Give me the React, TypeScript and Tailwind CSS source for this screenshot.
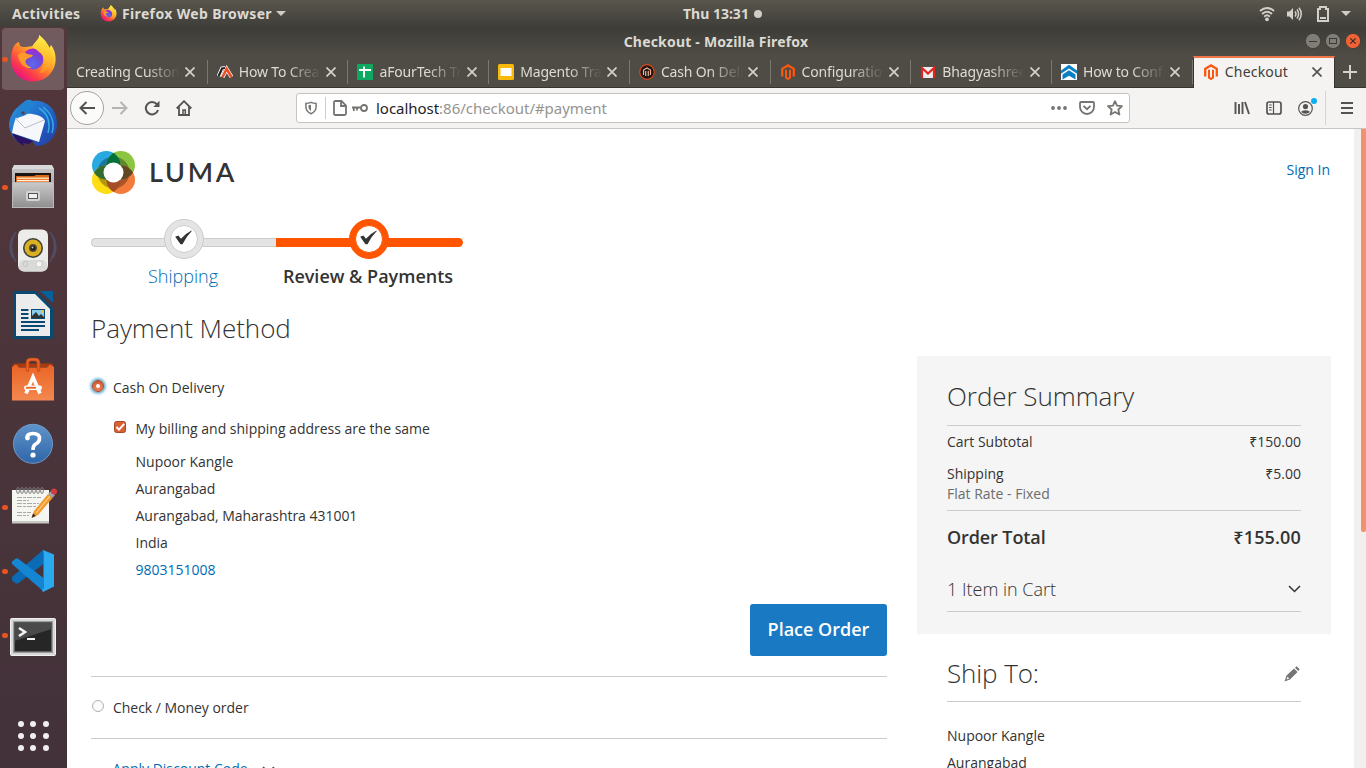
import React from "react";

const UI = "font-['Noto_Sans','Open_Sans',sans-serif]";

function Firefox({ size, id }: { size: number; id: string }) {
  return (
    <svg width={size} height={size} viewBox="0 0 48 48" className="shrink-0">
      <defs>
        <linearGradient id={id + "a"} x1="0.85" y1="0.1" x2="0.2" y2="0.95">
          <stop offset="0" stopColor="#fff44f" />
          <stop offset="0.3" stopColor="#ffbd2e" />
          <stop offset="0.55" stopColor="#ff7a2c" />
          <stop offset="0.8" stopColor="#fb3550" />
          <stop offset="1" stopColor="#e6128a" />
        </linearGradient>
        <radialGradient id={id + "b"} cx="0.5" cy="0.75" r="0.7">
          <stop offset="0" stopColor="#5a6cf0" />
          <stop offset="0.6" stopColor="#7047d8" />
          <stop offset="1" stopColor="#a52bd0" />
        </radialGradient>
        <linearGradient id={id + "c"} x1="0.6" y1="0" x2="0.5" y2="1">
          <stop offset="0" stopColor="#fff04a" />
          <stop offset="0.5" stopColor="#ffc62f" />
          <stop offset="1" stopColor="#ff8b25" />
        </linearGradient>
      </defs>
      <path d="M5 11 C6 9 9 7 10 7 L11 11 C13 12 15 12 17 12 L24 11 C28 4 31 3 30 0 C36 5 39 9 40 14 L42 10 C46 15 47 21 46.500 27 C45 38 36 46.500 24 46.500 C11 46.500 2 37 2 24 C2 20 3 14 5 11Z" fill={`url(#${id}a)`} />
      <circle cx="24" cy="24" r="10.500" fill={`url(#${id}b)`} />
      <path d="M23 12 C25 7 31 5 30 0 C36 5 41 11 43 19 C45 30 38 38 30 38 C37 31 36 20 30 17 C27 14 25 13 23 12Z" fill={`url(#${id}c)`} />
      <path d="M9 20 C12 17 16 17 18 19 L24 20 C23 23 19 22 17 25 C15 28 19 31 23 33 C16 34 10 29 9 20Z" fill="#ff9a2a" />
    </svg>
  );
}

function Thunderbird() {
  return (
    <svg width="48" height="48" viewBox="0 0 48 48">
      <defs>
        <linearGradient id="tb" x1="0" y1="0" x2="1" y2="1">
          <stop offset="0" stopColor="#2f9be0" />
          <stop offset="0.6" stopColor="#1d5fc4" />
          <stop offset="1" stopColor="#2a3a9c" />
        </linearGradient>
      </defs>
      <path d="M14 4 C17 0 21 0 23 2 C37 0 48 10 48 25 C48 38 39 47 27 47 L24 42 L10 44 L14 46 C6 42 0 34 0 25 C1 17 5 11 9 8Z" fill="url(#tb)" />
      <path d="M3 34 L24 42 L20 45 L14 44 L15 47 C9 44 5 39 3 34Z" fill="#2a1264" />
      <path d="M7 19 L16 15 C22 14 34 16 36 22 L30 43 L3 34 C4 28 5 23 7 19Z" fill="#f6f7fa" />
      <path d="M6 19 L16 29 L35 21" fill="none" stroke="#b9bec9" strokeWidth="1" />
      <path d="M10 7 C14 2 20 1 23 2 C26 6 22 9 20 13 C17 18 10 17 8 20 C7 14 8 10 10 7Z" fill="#2282d2" />
      <path d="M30 9 C38 14 42 22 39 34 M34 8 C43 15 46 24 43 34" fill="none" stroke="#36abe4" strokeWidth="1.500" />
      <circle cx="14" cy="14" r="1.700" fill="#533f50" />
    </svg>
  );
}

function Files() {
  return (
    <svg width="48" height="48" viewBox="0 0 48 48">
      <defs>
        <linearGradient id="fl" x1="0" y1="0" x2="0" y2="1">
          <stop offset="0" stopColor="#c9c9c9" />
          <stop offset="1" stopColor="#8f8f8f" />
        </linearGradient>
      </defs>
      <path d="M5 3 H43 L45 6 V42 H3 V6Z" fill="url(#fl)" />
      <path d="M5 2 H43 L45 6 H3Z" fill="#d9d9d9" />
      <rect x="6" y="10" width="36" height="11" fill="#1b1512" />
      <path d="M7 13 H25 L27 12 H40 V20 H7Z" fill="#d86a1e" />
      <rect x="8" y="14.500" width="32" height="1.500" fill="#f6d9ad" />
      <path d="M8 16 H40 V20 H8Z" fill="#f4792f" />
      <rect x="8" y="17" width="32" height="1.200" fill="#fff0d8" />
      <rect x="3.500" y="19.500" width="41" height="25" fill="url(#fl)" stroke="#b9b9b9" strokeWidth="1" />
      <rect x="17" y="28" width="14" height="10" rx="2" fill="#d3d3d3" />
      <rect x="19.500" y="30.500" width="9" height="5" fill="#f0f0f0" stroke="#555" strokeWidth="1" />
    </svg>
  );
}

function Speaker() {
  return (
    <svg width="48" height="48" viewBox="0 0 48 48">
      <path d="M7 5 Q-2 18 7 35 M4 9 Q-2 20 4 31 M41 5 Q50 18 41 35 M44 9 Q50 20 44 31" fill="none" stroke="#53608a" strokeWidth="1.500" opacity="0.550" />
      <rect x="9" y="2.500" width="30" height="42" rx="6" fill="#ececea" />
      <rect x="10" y="33" width="28" height="11.500" rx="5" fill="#dadad8" />
      <circle cx="24" cy="21" r="10" fill="#3b3b3b" />
      <circle cx="24" cy="21" r="8.500" fill="#d9b021" />
      <circle cx="24" cy="21" r="4" fill="#59502c" />
      <circle cx="24" cy="21" r="2.500" fill="#1c1c1c" />
      <circle cx="23.500" cy="20.500" r="1" fill="#c9c9c9" />
      <circle cx="30" cy="37" r="3" fill="#f8f8f8" stroke="#c2c2c2" strokeWidth="0.700" />
      <rect x="14.500" y="34.500" width="4" height="5" rx="1.500" fill="none" stroke="#c6c6c6" />
    </svg>
  );
}

function Writer() {
  return (
    <svg width="48" height="48" viewBox="0 0 48 48">
      <path d="M6 0 H27 L44 17 V46 Q44 48 42 48 H6 Q4 48 4 46 V2 Q4 0 6 0Z" fill="#0a4a72" />
      <path d="M7 3 H26 L41 18 V45 H7Z" fill="#ececec" />
      <path d="M31 0 H44 V12Z" fill="#05609c" />
      <g fill="#0a4a72">
        <rect x="12" y="18" width="7.500" height="2" />
        <rect x="12" y="22" width="7.500" height="2" />
        <rect x="12" y="26" width="7.500" height="2" />
        <rect x="12" y="30" width="24" height="2" />
        <rect x="12" y="34" width="24" height="2" />
        <rect x="12" y="38" width="18" height="2" />
        <rect x="22" y="18" width="14" height="10" />
      </g>
      <rect x="23" y="19" width="12" height="8" fill="#89cdea" />
      <path d="M23 27 V25 L27 21 L30 25 L32 23 L35 26 V27Z" fill="#333" />
      <circle cx="33.500" cy="20.500" r="1.500" fill="#f2c230" />
    </svg>
  );
}

function Software() {
  return (
    <svg width="48" height="48" viewBox="0 0 48 48">
      <defs>
        <linearGradient id="sw" x1="0" y1="0" x2="0" y2="1">
          <stop offset="0" stopColor="#ea6424" />
          <stop offset="1" stopColor="#f38850" />
        </linearGradient>
      </defs>
      <path d="M5 8.500 H43 L45 12 H3Z" fill="#a93b0f" />
      <path d="M3 12 L7 9.500 L10 12.500 H38 L41 9.500 L45 12 V45.500 H3Z" fill="url(#sw)" />
      <path d="M18.500 15 V8 Q18.500 4.500 22 4.500 H26 Q29.500 4.500 29.500 8 V15" fill="none" stroke="#c84713" strokeWidth="3.500" strokeLinecap="round" />
      <path d="M18.500 15 V8 Q18.500 4.500 22 4.500 H26 Q29.500 4.500 29.500 8 V15" fill="none" stroke="#e8642c" strokeWidth="1.800" strokeLinecap="round" />
      <path d="M17 38.500 L24 22 L31 38.500" fill="none" stroke="#fff" strokeWidth="3.600" />
      <rect x="15" y="30.500" width="18" height="4.500" rx="2.200" fill="#fff" />
      <rect x="17" y="31.800" width="10" height="1.900" fill="#e9682b" />
    </svg>
  );
}

function Help() {
  return (
    <svg width="48" height="48" viewBox="0 0 48 48">
      <defs>
        <linearGradient id="hp" x1="0" y1="0" x2="0" y2="1">
          <stop offset="0" stopColor="#5f93ca" />
          <stop offset="1" stopColor="#2f66a8" />
        </linearGradient>
      </defs>
      <circle cx="24" cy="24.800" r="19.500" fill="url(#hp)" stroke="#6f9bcb" strokeWidth="1" />
      <path d="M18 19 Q18 14.500 24 14.500 Q30.500 14.500 30.500 19.500 Q30.500 23 26 25.500 Q24 27 24 31" fill="none" stroke="#fff" strokeWidth="3.600" />
      <circle cx="18.500" cy="19" r="2.400" fill="#fff" />
      <circle cx="24" cy="36" r="2.600" fill="#fff" />
    </svg>
  );
}

function Notes() {
  return (
    <svg width="48" height="48" viewBox="0 0 48 48">
      <rect x="3" y="7" width="37" height="33" fill="#f5f5f1" />
      <rect x="3" y="38" width="37" height="2.500" fill="#c9c9c5" />
      {[9, 13, 17, 21, 25, 29, 33].map((x) => (
        <ellipse key={x} cx={x} cy="7.500" rx="1.400" ry="3" fill="none" stroke="#7b7b7b" strokeWidth="1" />
      ))}
      <path d="M8 14.500 H32 M8 17.500 H20 M8 20.500 H30 M8 23.500 H28 M8 29.500 H22 M8 32.500 H20" stroke="#a9a9a5" strokeWidth="1" strokeDasharray="5 1 3 1" />
      <path d="M23 34 L25 28 L39 11 L43.500 15 L29 32Z" fill="#f0992d" />
      <path d="M27 30 L41 13" stroke="#ffc777" strokeWidth="1.300" />
      <path d="M39 11 L42 8 L46 12 L43.500 15Z" fill="#9fa3a8" />
      <circle cx="45" cy="8.500" r="3" fill="#d33a3f" />
      <path d="M22.500 35 L24 30.500 L27 33Z" fill="#3d2c18" />
    </svg>
  );
}

function Code() {
  return (
    <svg width="48" height="48" viewBox="0 0 48 48">
      <path d="M34 3 L3 30 V33.500 L7 36.500 L9 36.500 L34.500 17Z" fill="#0b6cb5" />
      <path d="M34 44 L3 17 V14.500 L7 11.500 L9 11.500 L34.500 31Z" fill="#1486d2" />
      <path d="M34 3 L45 7.500 V39.500 L34 45 L33 43 L34.500 41 V7Z" fill="#2baaf2" />
    </svg>
  );
}

function Terminal() {
  return (
    <svg width="48" height="48" viewBox="0 0 48 48">
      <rect x="1.500" y="7.500" width="45" height="37" rx="1" fill="#d9d9d9" stroke="#f0f0f0" />
      <rect x="4" y="10" width="40" height="32" fill="#9b9b9b" />
      <rect x="5.500" y="11.500" width="37" height="29" fill="#262626" />
      <path d="M5.500 11.500 H42.500 V18 L5.500 30Z" fill="#4a4a4a" />
      <path d="M10 17 L16 21 L10 25" fill="none" stroke="#f2f2f2" strokeWidth="2.600" />
      <rect x="18" y="27" width="8" height="2" fill="#f2f2f2" />
    </svg>
  );
}

const dock = [
  { icon: <Firefox size={48} id="fx" />, run: true, active: true },
  { icon: <Thunderbird /> },
  { icon: <Files />, run: true },
  { icon: <Speaker /> },
  { icon: <Writer /> },
  { icon: <Software /> },
  { icon: <Help /> },
  { icon: <Notes />, run: true },
  { icon: <Code />, run: true },
  { icon: <Terminal />, run: true },
];

function Dock() {
  return (
    <aside className="flex w-[67px] shrink-0 flex-col bg-linear-to-b from-[#52373b] to-[#43323a]">
      {dock.map((d, i) => (
        <div key={i} className="flex h-16 items-center pl-0.5">
          <div className={"relative flex h-[62px] w-[62px] items-center justify-center rounded-[4px] " + (d.active ? "bg-[#725b5f]" : "")}>
            {d.run && <span className="absolute top-[28.500px] left-0 size-[5.500px] rounded-full bg-[#e95420]" />}
            {d.icon}
          </div>
        </div>
      ))}
      <div className="mt-[54px] ml-[18px] grid w-[31px] grid-cols-3 gap-x-[6px] gap-y-[6px]">
        {Array.from({ length: 9 }, (_, i) => (
          <span key={i} className="size-[6px] rounded-full bg-[#f0eeee]" />
        ))}
      </div>
    </aside>
  );
}

function TopBar() {
  return (
    <header className={"flex h-[27px] shrink-0 items-center bg-linear-to-b from-[#59564d] to-[#3f3e39] text-[14px] font-bold text-[#dcd9d2] " + UI}>
      <span className="ml-3 w-[88px] tracking-[0.350px] whitespace-nowrap">Activities</span>
      <Firefox size={17} id="fs" />
      <span className="ml-[5px] w-[154px] tracking-[0.350px] whitespace-nowrap">Firefox Web Browser</span>
      <svg width="10" height="5" viewBox="0 0 10 5"><path d="M0 0H10L5 5Z" fill="#cfcdc8" /></svg>
      <span className="ml-[397px] w-[71px] whitespace-nowrap">Thu 13:31</span>
      <span className="size-2 rounded-full bg-[#cfcdc8]" />
      <svg className="ml-[497px]" width="16" height="16" viewBox="0 0 16 16" fill="none" stroke="#d2d0cb" strokeWidth="1.900">
        <path d="M1 5 Q8 -1 15 5 M3 8 Q8 3.500 13 8 M5.200 10.700 Q8 8 10.800 10.700" />
        <circle cx="8" cy="13.300" r="1.900" fill="#d2d0cb" stroke="none" />
      </svg>
      <svg className="ml-[12px]" width="16" height="16" viewBox="0 0 16 16" fill="none" stroke="#d2d0cb" strokeWidth="1.500">
        <path d="M0 5.500H2.500L6 2V14L2.500 10.500H0Z" fill="#d2d0cb" stroke="none" />
        <path d="M8 5.500Q10 8 8 10.500M10 3.500Q13.200 8 10 12.500M12 1.800Q16.500 8 12 14.200" />
      </svg>
      <svg className="ml-[14px]" width="12" height="16" viewBox="0 0 12 16" fill="none" stroke="#d2d0cb" strokeWidth="2">
        <path d="M1 3H3V1H9V3H11V15H1Z" />
        <path d="M3 12H9" />
      </svg>
      <svg className="ml-[12px]" width="10" height="5" viewBox="0 0 10 5"><path d="M0 0H10L5 5Z" fill="#cfcdc8" /></svg>
    </header>
  );
}

function Magento({ color = "#f9560f" }: { color?: string }) {
  return (
    <svg width="16" height="16" viewBox="0 0 16 16" fill="none" stroke={color} strokeWidth="2.300">
      <path d="M2.200 12.500V4.800L8 1.400L13.800 4.800V12.500" />
      <path d="M6 5.700V13.700L8 15L10 13.700V5.700" strokeWidth="2" />
    </svg>
  );
}

const tabs = [
  { label: "Creating Custom", icon: null },
  {
    label: "How To Create",
    icon: (
      <svg width="16" height="16" viewBox="0 0 16 16" fill="none">
        <path d="M1.500 12.500L5 4.500L8 4" stroke="#fff" strokeWidth="4" />
        <path d="M5.500 13L9.700 5L14.500 13" stroke="#fff" strokeWidth="4" />
        <path d="M1.500 12.500L5 4.500L8 4" stroke="#222" strokeWidth="2.200" />
        <path d="M5.500 13L9.700 5L14.500 13" stroke="#ee4a23" strokeWidth="2.600" />
      </svg>
    ),
  },
  {
    label: "aFourTech Trai",
    icon: (
      <svg width="16" height="16" viewBox="0 0 16 16"><rect width="16" height="16" rx="1" fill="#0ea960" /><path d="M2 6H14M7 2.500V13.500" stroke="#fff" strokeWidth="1.900" /></svg>
    ),
  },
  {
    label: "Magento Traini",
    icon: (
      <svg width="16" height="16" viewBox="0 0 16 16"><rect width="16" height="16" rx="1.500" fill="#f9b90a" /><rect x="2.500" y="4" width="11" height="8" fill="#fff" /></svg>
    ),
  },
  {
    label: "Cash On Deliv",
    icon: (
      <svg width="16" height="16" viewBox="0 0 16 16" fill="none"><circle cx="8" cy="8" r="7.300" fill="#1e1715" stroke="#d9481c" strokeWidth="1.200" /><path d="M4.500 11V6L8 4L11.500 6V11M6.700 7V12M9.300 7V12" stroke="#eab09a" strokeWidth="1.200" /></svg>
    ),
  },
  { label: "Configuration", icon: <Magento /> },
  {
    label: "Bhagyashree K",
    icon: (
      <svg width="16" height="16" viewBox="0 0 16 16" fill="none"><rect x="1" y="3" width="14" height="11" rx="1" fill="#eee" /><path d="M2 14V4L8 9.500L14 4V14" stroke="#e0251f" strokeWidth="2.200" /></svg>
    ),
  },
  {
    label: "How to Config",
    icon: (
      <svg width="16" height="16" viewBox="0 0 16 16"><rect width="16" height="16" fill="#fff" /><path d="M0 6.500L8 0.800L16 6.500V9.800L8 4.600L0 9.800ZM1.500 10.500L8 6.300L14.500 10.500V15.500L8 11.800L1.500 15.500Z" fill="#0b7fc4" /></svg>
    ),
  },
];

function Close({ color }: { color: string }) {
  return (
    <svg width="10" height="10" viewBox="0 0 10 10" className="shrink-0"><path d="M0.500 0.500L9.500 9.500M9.500 0.500L0.500 9.500" stroke={color} strokeWidth="1.700" /></svg>
  );
}

function Tabs() {
  return (
    <div className={"flex h-8 bg-[#4f4c45] text-[14px] text-[#dedbd4] shadow-[inset_0_-1px_0_#35342f] " + UI}>
      {tabs.map((t, i) => (
        <div key={i} className="flex w-[140.720px] shrink-0 items-center">
          <div className="flex min-w-0 flex-1 items-center pl-[9px]">
            {t.icon && <span className="mr-[6px] block w-4 shrink-0">{t.icon}</span>}
            <span className={"-mt-0.5 block overflow-hidden whitespace-nowrap [mask-image:linear-gradient(to_left,transparent,black_34px)] " + (t.icon ? "w-[82px] tracking-[-0.150px]" : "w-[104px] tracking-[-0.150px]")}>
              {t.label}
            </span>
          </div>
          <Close color="#d5d2cb" />
          <span className="ml-[11.500px] h-6 w-px bg-[#7a776e]" />
        </div>
      ))}
      <div className="flex w-[142px] shrink-0 items-center border-x border-t-2 border-x-[#35342f] border-t-[#f0764a] bg-[#f4f3f2] text-[#3f3e3a]">
        <span className="-mt-0.5 ml-[9px]"><Magento /></span>
        <span className="-mt-1 ml-[6px] w-[87px] tracking-[0.200px]">Checkout</span>
        <span className="-mt-0.5"><Close color="#55534e" /></span>
      </div>
      <div className="flex flex-1 items-center justify-center">
        <svg width="14" height="14" viewBox="0 0 14 14"><path d="M7 0V14M0 7H14" stroke="#d5d2cb" strokeWidth="2" /></svg>
      </div>
    </div>
  );
}

function Toolbar() {
  return (
    <div className={"flex h-[41px] items-center border-b border-[#c8c6c4] bg-[#f4f3f2] " + UI}>
      <div className="ml-[3px] flex size-[34px] items-center justify-center rounded-full border border-[#a3a19e] bg-[#fbfbfa]">
        <svg width="16" height="14" viewBox="0 0 16 14" fill="none" stroke="#545350" strokeWidth="2"><path d="M16 7H1.500M7.500 1L1.500 7L7.500 13" /></svg>
      </div>
      <svg className="ml-[8px]" width="16" height="14" viewBox="0 0 16 14" fill="none" stroke="#b5b4b2" strokeWidth="2"><path d="M0 7H14.500M8.500 1L14.500 7L8.500 13" /></svg>
      <svg className="ml-[16px]" width="16" height="16" viewBox="0 0 16 16" fill="none" stroke="#545350" strokeWidth="2"><path d="M14 10A6.200 6.200 0 1 1 12.800 4.200" /><path d="M15.500 0.800V7H9.300Z" fill="#545350" stroke="none" /></svg>
      <svg className="ml-[16px]" width="16" height="16" viewBox="0 0 16 16" fill="none" stroke="#545350" strokeWidth="1.800"><path d="M0.700 8.500L8 1.200L15.300 8.500M3 7V15H13V7" /><path d="M7 15V10H9.300V15" strokeWidth="1.500" /></svg>
      <div className="ml-[104px] flex h-[30px] w-[834px] items-center rounded-[3px] border border-[#c6c4c2] bg-white">
        <svg className="ml-2" width="12" height="14" viewBox="0 0 13 14" fill="none" stroke="#757470" strokeWidth="1.600"><path d="M1 2Q4 2 6.500 0.900Q9 2 12 2V6Q12 11 6.500 13.200Q1 11 1 6Z" /><path d="M6.500 3.500V10.500Q3.800 9 3.800 6V4Z" fill="#757470" stroke="none" /></svg>
        <span className="ml-[8px] h-[22px] w-px bg-[#cfcdcb]" />
        <svg className="ml-[7px]" width="14" height="16" viewBox="0 0 14 16" fill="none" stroke="#757470" strokeWidth="1.800"><path d="M1 2.500Q1 1 2.500 1H8.500L13 5.500V13.500Q13 15 11.500 15H2.500Q1 15 1 13.500ZM8 1V6H13" /></svg>
        <svg className="ml-[5px]" width="16" height="8" viewBox="0 0 16 8" fill="none" stroke="#757470" strokeWidth="1.800"><circle cx="12" cy="4" r="3" /><path d="M9 3.500H0M1.800 3V7M5 3V6.500" /></svg>
        <span className="ml-[8px] text-[15px] tracking-[-0.030px] whitespace-nowrap text-[#96948f]">
          <span className="text-[#23221f]">localhost</span>:86/checkout/#payment
        </span>
        <div className="ml-auto flex items-center pr-[6px]">
          <svg width="16" height="4" viewBox="0 0 16 4" fill="#757470"><circle cx="2" cy="2" r="1.900" /><circle cx="8" cy="2" r="1.900" /><circle cx="14" cy="2" r="1.900" /></svg>
          <svg className="ml-[12px]" width="16" height="14" viewBox="0 0 16 14" fill="none" stroke="#757470" strokeWidth="1.800"><path d="M2 1H14Q15 1 15 2V6A7 7 0 0 1 1 6V2Q1 1 2 1Z" /><path d="M4.500 4.800L8 8.200L11.500 4.800" /></svg>
          <svg className="ml-[12px]" width="16" height="16" viewBox="0 0 16 16" fill="none" stroke="#757470" strokeWidth="1.800" strokeLinejoin="round"><path d="M8 1.200L10 5.700L15 6.200L11.300 9.500L12.400 14.500L8 12L3.600 14.500L4.700 9.500L1 6.200L6 5.700Z" /></svg>
        </div>
      </div>
      <svg className="ml-[104px]" width="16" height="14" viewBox="0 0 16 14" fill="none" stroke="#545350" strokeWidth="1.900"><path d="M1.500 1V13M5 3V13M8.500 1V13M11 1L15 13" /></svg>
      <svg className="ml-[16px]" width="16" height="14" viewBox="0 0 16 14" fill="none" stroke="#545350" strokeWidth="1.700"><rect x="1" y="1" width="14" height="12" rx="2" /><path d="M7.500 1V13M3 4H5.700M3 6.500H5.700M3 9H5.700" strokeWidth="1.200" /></svg>
      <span className="relative ml-[16px] mr-px block">
        <svg width="15" height="15" viewBox="0 0 15 15"><circle cx="7.500" cy="7.500" r="6.800" fill="none" stroke="#545350" strokeWidth="1.200" /><circle cx="7.500" cy="5.600" r="2.600" fill="#545350" /><path d="M3 11Q4 9.200 7.500 9.200Q11 9.200 12 11Q10 12.800 7.500 12.800Q5 12.800 3 11Z" fill="#545350" /></svg>
        <span className="absolute -top-[3px] left-[13px] size-[6px] rounded-full bg-[#0aaef5]" />
      </span>
      <span className="ml-[11px] h-[34px] w-px bg-[#d6d4d2]" />
      <svg className="ml-[15px]" width="12" height="12" viewBox="0 0 12 12" stroke="#545350" strokeWidth="2"><path d="M0 1H12M0 6H12M0 11H12" /></svg>
    </div>
  );
}

function LumaMark() {
  return (
    <svg width="43" height="43" viewBox="0 0 43 43">
      <defs>
        <clipPath id="tl"><circle cx="14.200" cy="14.200" r="14.200" /></clipPath>
        <clipPath id="br"><circle cx="28.800" cy="28.800" r="14.200" /></clipPath>
      </defs>
      <circle cx="14.200" cy="14.200" r="14.200" fill="#29a9e1" />
      <circle cx="28.800" cy="14.200" r="14.200" fill="#8cc540" />
      <circle cx="14.200" cy="28.800" r="14.200" fill="#ffdd15" />
      <circle cx="28.800" cy="28.800" r="14.200" fill="#f37b3b" />
      <circle cx="21.500" cy="21.500" r="16" fill="#000" opacity="0.300" />
      <g clipPath="url(#tl)">
        <circle cx="28.800" cy="14.200" r="14.200" fill="#04703a" />
        <circle cx="14.200" cy="28.800" r="14.200" fill="#326d30" />
      </g>
      <g clipPath="url(#br)">
        <circle cx="28.800" cy="14.200" r="14.200" fill="#614722" />
        <circle cx="14.200" cy="28.800" r="14.200" fill="#a44d27" />
      </g>
      <circle cx="21.500" cy="21.500" r="10" fill="#fff" />
    </svg>
  );
}

function StepDot({ active }: { active?: boolean }) {
  return (
    <span className={"absolute top-0 left-[73px] flex size-10 items-center justify-center rounded-full border " + (active ? "border-[#ff5501] bg-[#ff5501]" : "border-[#ccc] bg-[#e4e4e4]")}>
      <span className={"flex size-[28px] items-center justify-center rounded-full border bg-white " + (active ? "border-[#ff5501]" : "border-[#ccc]")}>
        <svg className="-mt-[3px] -ml-px" width="17" height="15" viewBox="0 0 17 15"><path d="M0.200 6.800L3.300 5.400L6 8.800Q10.500 3.500 16.500 0.500L16.800 1.100Q11 7 7.500 14.200H5.500Z" fill="#333" /></svg>
      </span>
    </span>
  );
}

function Progress() {
  return (
    <ol className="flex h-[70px] w-[372px] text-[18px] leading-6">
      <li className="relative w-[185px] pt-[19px]">
        <div className="h-[9px] rounded-l-full border border-r-0 border-[#ccc] bg-[#e4e4e4]" />
        <StepDot />
        <div className="mt-[17px] -ml-px text-center font-light text-[#006bb4]">Shipping</div>
      </li>
      <li className="relative w-[187px] pt-[19px]">
        <div className="h-[9px] rounded-r-full bg-[#ff5501]" />
        <StepDot active />
        <div className="mt-[17px] -ml-[3px] text-center font-semibold whitespace-nowrap text-[#333]">Review &amp; Payments</div>
      </li>
    </ol>
  );
}

function Payment() {
  return (
    <section className="w-[796px]">
      <h2 className="mt-[24px] text-[26px] leading-[30px] font-light tracking-[-0.050px]">Payment Method</h2>
      <div className="mt-[35px] flex items-center leading-5">
        <span className="-mt-[5px] ml-px flex size-3 items-center justify-center rounded-full border border-[#9c452a] bg-linear-to-b from-[#cf5a33] to-[#ee8058] shadow-[0_0_3px_1.500px_#4ba0c8]">
          <span className="size-1 rounded-full bg-white" />
        </span>
        <span className="ml-[9px]">Cash On Delivery</span>
      </div>
      <div className="mt-[21px] flex items-center pl-[23px] leading-5">
        <svg className="-mt-[4px]" width="12" height="12" viewBox="0 0 12 12"><rect x="0.500" y="0.500" width="11" height="11" rx="2" fill="#dc6036" stroke="#a44a2b" /><path d="M2.500 6L5 8.600L10.200 2.800" fill="none" stroke="#fff" strokeWidth="2" /></svg>
        <span className="ml-[9.500px]">My billing and shipping address are the same</span>
      </div>
      <address className="mt-[9px] pl-[44.500px] leading-[27px] not-italic">
        <div>Nupoor Kangle</div>
        <div>Aurangabad</div>
        <div className="tracking-[-0.030px]">Aurangabad, Maharashtra 431001</div>
        <div>India</div>
        <div className="text-[#006bb4]">9803151008</div>
      </address>
      <div className="mt-[21px] flex justify-end">
        <button className="h-[52px] w-[137px] rounded-[3px] bg-[#1979c3] pb-px text-[18px] font-semibold text-white">Place Order</button>
      </div>
      <div className="mt-5 flex h-[63px] items-center border-y border-[#ccc]">
        <span className="-mt-[3px] ml-px size-3 rounded-full border border-[#b3b1af] bg-[#fbfbfb]" />
        <span className="ml-[9px] tracking-[-0.030px]">Check / Money order</span>
      </div>
      <div className="mt-5 flex pl-[21.500px] leading-5 text-[#006bb4]">
        Apply Discount Code
        <svg className="mt-[7px] ml-[14px]" width="13" height="8" viewBox="0 0 13 8" fill="none" stroke="#555" strokeWidth="1.700"><path d="M1 1L6.500 6.500L12 1" /></svg>
      </div>
    </section>
  );
}

function Summary() {
  return (
    <aside className="mt-[67px] w-[414px]">
      <div className="h-[278px] bg-[#f5f5f5] px-[30px] pt-[25px]">
        <h2 className="border-b border-[#ccc] pb-[14px] text-[26px] leading-[30px] font-light tracking-[-0.050px]">Order Summary</h2>
        <div className="mt-[6px] flex justify-between leading-5"><span>Cart Subtotal</span><span>₹150.00</span></div>
        <div className="mt-3 flex justify-between leading-5"><span>Shipping</span><span>₹5.00</span></div>
        <div className="border-b border-[#ccc] pb-[6px] leading-5 text-[#6d6d6d]">Flat Rate - Fixed</div>
        <div className="mt-[14px] flex justify-between text-[18px] leading-6 font-semibold"><span className="tracking-[-0.100px]">Order Total</span><span className="tracking-[0.150px]">₹155.00</span></div>
        <div className="mt-7 flex justify-between border-b border-[#ccc] pb-[10px] text-[18px] leading-6 font-light">
          <span>1 Item in Cart</span>
          <svg className="mt-[8px]" width="13" height="8" viewBox="0 0 13 8" fill="none" stroke="#333" strokeWidth="1.500"><path d="M1 1L6.500 6.500L12 1" /></svg>
        </div>
      </div>
      <div className="px-[30px] pt-[24px]">
        <div className="flex justify-between border-b border-[#ccc] pb-[13px]">
          <h2 className="text-[26px] leading-[30px] font-light tracking-[-0.100px]">Ship To:</h2>
          <svg className="mt-[8px] mr-px" width="16" height="16" viewBox="0 0 16 16"><path d="M0.500 15.500L2.500 9.500L10 2.500L13.500 6L6 13.500ZM2.500 13.500L5.300 12.500L3.500 10.700Z" fill="#757575" fillRule="evenodd" /><path d="M11 1.700L12.700 0.300L15.700 3.300L14.300 5Z" fill="#757575" /></svg>
        </div>
        <div className="mt-[20px] leading-[27px]"><div>Nupoor Kangle</div><div>Aurangabad</div></div>
      </div>
    </aside>
  );
}

export default function App() {
  return (
    <div className="flex h-[768px] w-[1366px] flex-col overflow-hidden bg-white">
      <TopBar />
      <div className="flex min-h-0 flex-1">
        <Dock />
        <div className="flex min-w-0 flex-1 flex-col">
          <div className={"relative flex h-[29px] shrink-0 items-center justify-center bg-linear-to-b from-[#3d3c38] to-[#4f4c45] text-[14px] font-bold text-[#dcd9d2] " + UI}>
            <span className="-mt-px -ml-[1px] whitespace-nowrap tracking-[0.200px]">Checkout - Mozilla Firefox</span>
            <div className="absolute top-[6px] right-[5px] flex gap-1">
              <svg width="16" height="16" viewBox="0 0 16 16"><circle cx="8" cy="8" r="7.600" fill="#807d76" stroke="#3b3a36" strokeWidth="0.800" /><path d="M4 8.500H12" stroke="#3b3a36" /></svg>
              <svg width="16" height="16" viewBox="0 0 16 16"><circle cx="8" cy="8" r="7.600" fill="#807d76" stroke="#3b3a36" strokeWidth="0.800" /><rect x="4.500" y="5.500" width="7" height="5" fill="none" stroke="#3b3a36" /></svg>
              <svg width="16" height="16" viewBox="0 0 16 16"><circle cx="8" cy="8" r="7.600" fill="#ee6237" stroke="#3b3a36" strokeWidth="0.800" /><path d="M5.300 5.300L10.700 10.700M10.700 5.300L5.300 10.700" stroke="#3b2a22" strokeWidth="1.200" /></svg>
            </div>
          </div>
          <Tabs />
          <Toolbar />
          <div className="flex min-h-0 flex-1 overflow-hidden font-['Open_Sans','Noto_Sans',sans-serif] text-[14px] text-[#333]">
            <main className="w-[1287px] shrink-0 pr-[23px] pl-6">
              <div className="flex h-[90px] justify-between pt-[22px]">
                <div className="flex h-[43px] items-center pl-px">
                  <LumaMark />
                  <span className="-mt-0.5 ml-[14px] font-['Lato',sans-serif] text-[27px] leading-[43px] font-semibold tracking-[2.700px] text-[#333]">LUMA</span>
                </div>
                <span className="pr-px leading-[38px] text-[#006bb4]">Sign In</span>
              </div>
              <Progress />
              <div className="flex justify-between">
                <Payment />
                <Summary />
              </div>
            </main>
            <div className="flex flex-1 justify-end bg-[#f1f0ef]">
              <div className="h-[403px] w-[5px] rounded-b-xs bg-[#f2916b]" />
            </div>
          </div>
        </div>
      </div>
    </div>
  );
}
